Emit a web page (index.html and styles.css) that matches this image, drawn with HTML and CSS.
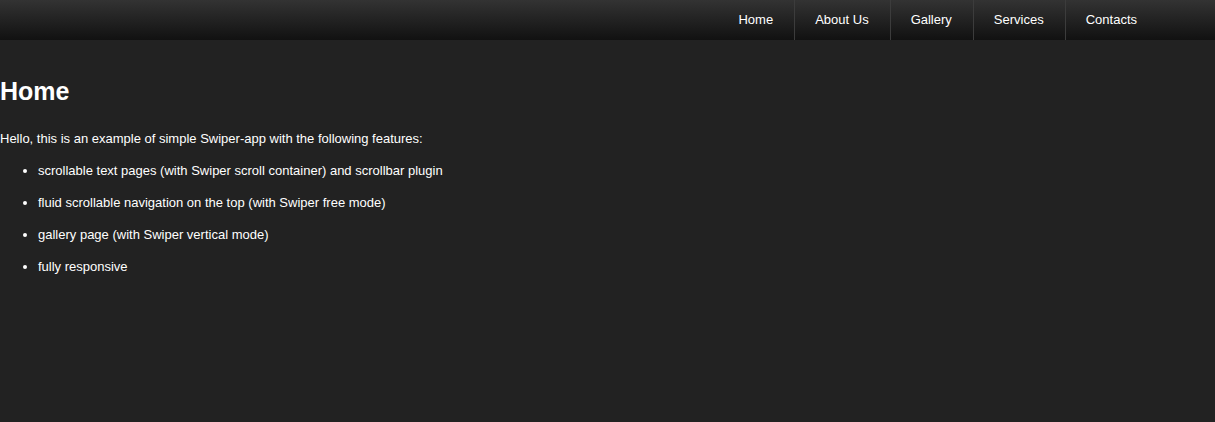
FILE: index.html
```html
<!DOCTYPE html>
<html lang="en">
<head>
  <meta charset="UTF-8">
  <title>Swiper App</title>
  <link rel="stylesheet" href="styles.css">
</head>
<body>
  <div class="top-nav">
    <a href="#" class="nav-item">Home</a>
    <a href="#" class="nav-item">About Us</a>
    <a href="#" class="nav-item">Gallery</a>
    <a href="#" class="nav-item">Services</a>
    <a href="#" class="nav-item">Contacts</a>
  </div>

  <div class="page">
    <h1>Home</h1>
    <p>Hello, this is an example of simple Swiper-app with the following features:</p>
    <ul>
      <li>scrollable text pages (with Swiper scroll container) and scrollbar plugin</li>
      <li>fluid scrollable navigation on the top (with Swiper free mode)</li>
      <li>gallery page (with Swiper vertical mode)</li>
      <li>fully responsive</li>
    </ul>
  </div>
</body>
</html>
```

FILE: styles.css
```css
body {
  margin: 0;
  background: #222;
  color: #fff;
  font-family: 'Liberation Sans', Arial, sans-serif;
  font-size: 13px;
  height: 100vh;
  overflow: hidden;
}

.top-nav {
  height: 40px;
  display: flex;
  justify-content: flex-end;
  padding-right: 57px;
  background: linear-gradient(to bottom, #333, #111);
}

.nav-item {
  display: flex;
  align-items: center;
  padding: 0 21px 2px 20px;
  color: #fff;
  text-decoration: none;
  font-size: 13px;
  border-left: 1px solid #3c3c3c;
}

.nav-item:first-child {
  border-left: none;
}

.page {
  padding: 0;
}

h1 {
  font-size: 25px;
  font-weight: bold;
  margin: 36px 0 0;
  line-height: 30px;
}

p {
  margin: 25px 0 0;
  line-height: 15px;
}

ul {
  margin: 17px 0 0;
  padding-left: 38px;
}

li {
  line-height: 15px;
  margin-bottom: 17px;
}
```
